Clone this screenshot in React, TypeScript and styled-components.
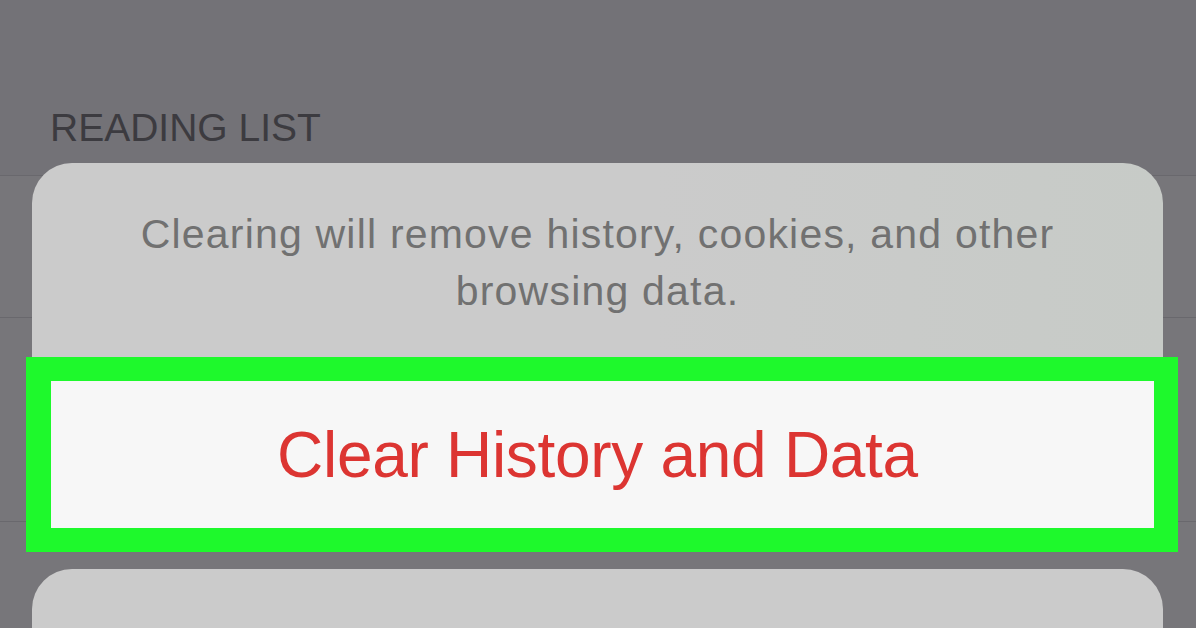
import React from 'react';
import styled, { createGlobalStyle } from 'styled-components';

const GlobalStyle = createGlobalStyle`
  html, body {
    margin: 0;
    padding: 0;
    background: #737277;
    font-family: "Liberation Sans", Arial, sans-serif;
  }
`;

const Screen = styled.div`
  position: relative;
  width: 1196px;
  height: 628px;
  overflow: hidden;
  background: #737277;
`;

// dimmed settings list behind the sheet
const SectionHeader = styled.div`
  box-sizing: border-box;
  height: 175px;
  padding: 108px 0 0 50px;
  font-size: 39px;
  line-height: 1;
  color: #3c3b40;
`;

const ListRow = styled.div<{ $h: number }>`
  height: ${(p) => p.$h}px;
  border-top: 1px solid #69686d;
  background: #77767a;
`;

const SheetLayer = styled.div`
  position: absolute;
  top: 163px;
  left: 32px;
  right: 33px;
  display: flex;
  flex-direction: column;
  gap: 17px;
`;

const Card = styled.div`
  flex-shrink: 0;
  border-radius: 40px;
  background: linear-gradient(90deg, #cbcbcb 55%, #c7cbc7 100%);
`;

const Message = styled.p`
  margin: 0;
  box-sizing: border-box;
  height: 194px;
  padding: 43px 40px 0;
  font-size: 41px;
  line-height: 57px;
  letter-spacing: 1.2px;
  text-align: center;
  color: #717171;
`;

const ActionRow = styled.div`
  position: relative;
  height: 195px;
  display: flex;
  align-items: center;
  justify-content: center;
  background: #f7f7f7;
`;

const ActionLabel = styled.span`
  font-size: 64px;
  color: #dc3532;
  letter-spacing: -0.3px;
`;

const Highlight = styled.div`
  position: absolute;
  top: 0;
  bottom: 0;
  left: -6px;
  right: -15px;
  border: 24px solid #1ef92c;
  border-left-width: 25px;
  pointer-events: none;
`;

const CancelCard = styled(Card)`
  height: 120px;
  background: #cbcbcb;
`;

export default function App() {
  return (
    <>
      <GlobalStyle />
      <Screen>
        <SectionHeader>READING LIST</SectionHeader>
        <ListRow $h={141} />
        <ListRow $h={203} />
        <ListRow $h={120} />
        <SheetLayer>
          <Card>
            <Message>
              Clearing will remove history, cookies, and other
              <br />
              browsing data.
            </Message>
            <ActionRow>
              <ActionLabel>Clear History and Data</ActionLabel>
              <Highlight />
            </ActionRow>
          </Card>
          <CancelCard />
        </SheetLayer>
      </Screen>
    </>
  );
}
